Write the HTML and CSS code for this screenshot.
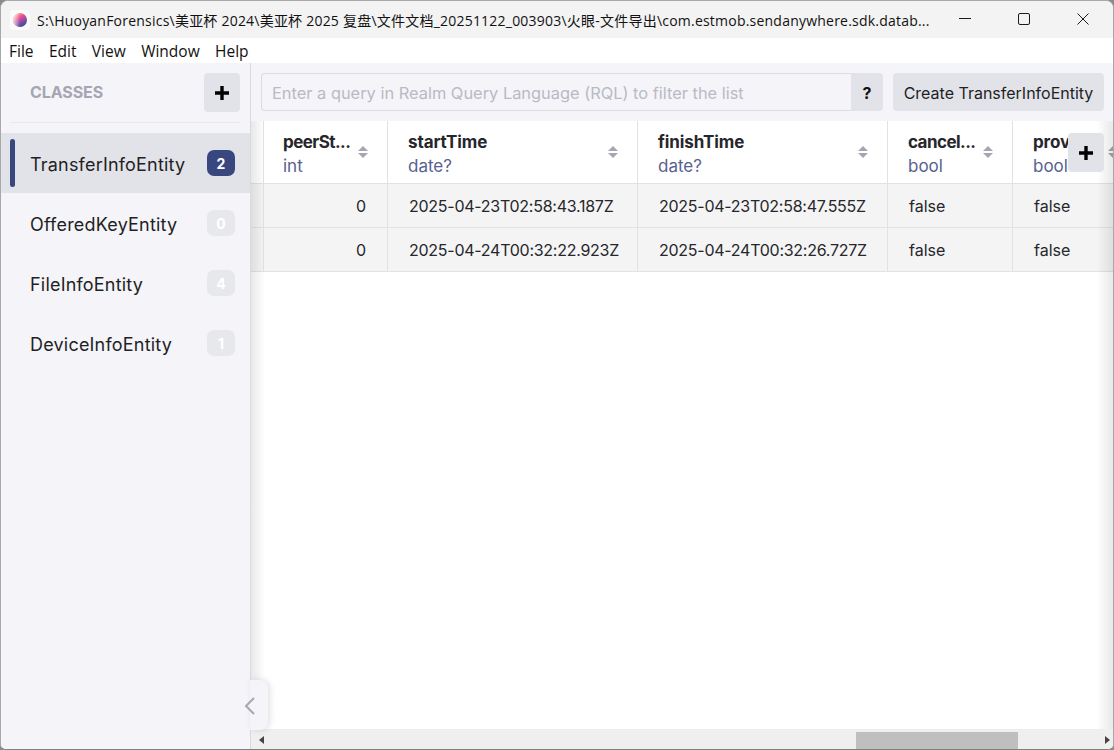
FILE: index.html
```html
<!DOCTYPE html>
<html lang="en">
<head>
<meta charset="utf-8">
<title>Realm Studio</title>
<link rel="stylesheet" href="styles.css">
</head>
<body>
<div class="window">
  <header class="titlebar">
    <div class="app-icon">
      <svg width="16" height="16" viewBox="0 0 16 16">
        <defs>
          <linearGradient id="orb" x1="0.2" y1="0" x2="0.75" y2="1">
            <stop offset="0" stop-color="#fbb98f"/>
            <stop offset="0.35" stop-color="#ee4f93"/>
            <stop offset="0.7" stop-color="#7a4ea8"/>
            <stop offset="1" stop-color="#39477f"/>
          </linearGradient>
          <linearGradient id="orb-light" x1="0" y1="0" x2="1" y2="0">
            <stop offset="0" stop-color="#fff" stop-opacity="0.75"/>
            <stop offset="0.5" stop-color="#fff" stop-opacity="0"/>
          </linearGradient>
        </defs>
        <circle cx="8" cy="8" r="7" fill="url(#orb)"/>
        <circle cx="8" cy="8" r="7" fill="url(#orb-light)"/>
      </svg>
    </div>
    <div class="title">S:\HuoyanForensics\美亚杯 2024\美亚杯 2025 复盘\文件文档_20251122_003903\火眼-文件导出\com.estmob.sendanywhere.sdk.datab...</div>
    <div class="win-controls">
      <svg class="win-btn" width="12" height="12" viewBox="0 0 12 12"><path d="M0 5.5H12" stroke="#1a1a1a" stroke-width="1"/></svg>
      <svg class="win-btn" width="12" height="12" viewBox="0 0 12 12"><rect x="0.5" y="0.5" width="11" height="11" rx="1.5" fill="none" stroke="#1a1a1a"/></svg>
      <svg class="win-btn" width="12" height="12" viewBox="0 0 12 12"><path d="M0.5 0.5L11.5 11.5M11.5 0.5L0.5 11.5" stroke="#1a1a1a" stroke-width="1"/></svg>
    </div>
  </header>
  <nav class="menubar">
    <span>File</span><span>Edit</span><span>View</span><span>Window</span><span>Help</span>
  </nav>
  <div class="main">
    <aside class="sidebar">
      <div class="side-head">
        <span class="classes">CLASSES</span>
        <button class="icon-btn"><svg width="14" height="14" viewBox="0 0 14 14"><path d="M7 0V14M0 7H14" stroke="#000" stroke-width="3.4"/></svg></button>
      </div>
      <ul class="class-list">
        <li class="class-item active"><span>TransferInfoEntity</span><b class="count">2</b></li>
        <li class="class-item"><span>OfferedKeyEntity</span><b class="count">0</b></li>
        <li class="class-item"><span>FileInfoEntity</span><b class="count">4</b></li>
        <li class="class-item"><span>DeviceInfoEntity</span><b class="count">1</b></li>
      </ul>
    </aside>
    <section class="content">
      <div class="toolbar">
        <div class="query">
          <div class="query-input">Enter a query in Realm Query Language (RQL) to filter the list</div>
          <div class="query-help">?</div>
        </div>
        <button class="create">Create TransferInfoEntity</button>
      </div>
      <div class="table-wrap">
        <div class="grid">
          <div class="cell head sliver"></div>
          <div class="cell head col-peer"><div class="head-text"><strong class="trunc">peerSt...</strong><em>int</em></div><i class="sort"></i></div>
          <div class="cell head"><div class="head-text"><strong>startTime</strong><em>date?</em></div><i class="sort"></i></div>
          <div class="cell head"><div class="head-text"><strong>finishTime</strong><em>date?</em></div><i class="sort"></i></div>
          <div class="cell head"><div class="head-text"><strong class="trunc">cancel...</strong><em>bool</em></div><i class="sort"></i></div>
          <div class="cell head"><div class="head-text"><strong>provider</strong><em>bool</em></div><i class="sort"></i></div>

          <div class="cell sliver"></div>
          <div class="cell num">0</div>
          <div class="cell date">2025-04-23T02:58:43.187Z</div>
          <div class="cell date">2025-04-23T02:58:47.555Z</div>
          <div class="cell">false</div>
          <div class="cell">false</div>

          <div class="cell sliver"></div>
          <div class="cell num">0</div>
          <div class="cell date">2025-04-24T00:32:22.923Z</div>
          <div class="cell date">2025-04-24T00:32:26.727Z</div>
          <div class="cell">false</div>
          <div class="cell">false</div>
        </div>
        <div class="shadow-left"></div>
        <div class="shadow-right"></div>
        <button class="icon-btn add-col"><svg width="14" height="14" viewBox="0 0 14 14"><path d="M7 0V14M0 7H14" stroke="#000" stroke-width="3.4"/></svg></button>
      </div>
      <div class="scrollbar">
        <svg class="arrow" width="6" height="8" viewBox="0 0 6 8"><path d="M5 0V8L0 4Z" fill="#444"/></svg>
        <div class="track"><div class="thumb"></div></div>
        <svg class="arrow" width="6" height="8" viewBox="0 0 6 8"><path d="M0 0V8L5 4Z" fill="#444"/></svg>
      </div>
    </section>
    <button class="collapse"><svg width="12" height="20" viewBox="0 0 12 20"><path d="M10 2L2 10L10 18" fill="none" stroke="#a6a7b2" stroke-width="2"/></svg></button>
  </div>
</div>
</body>
</html>
```
FILE: styles.css
```css
* { box-sizing: border-box; }
html, body { margin: 0; height: 100%; background: #8a8a8a; }
body { overflow: hidden; font-family: Inter, "Noto Sans CJK SC", sans-serif; color: #1f1f24; }
button { font-family: inherit; border: 0; padding: 0; margin: 0; }
ul { list-style: none; margin: 0; padding: 0; }

.window {
  width: 1114px; height: 750px; display: flex; flex-direction: column;
  background: #fff; border: 1px solid #a8a8a8; border-bottom-color: #808080;
  border-radius: 8px 8px 6px 6px; overflow: hidden;
}
.titlebar { height: 37px; flex: none; display: flex; align-items: center; background: #f3f3f3; padding-left: 9px; }
.app-icon { flex: none; width: 20px; height: 20px; background: #fbfbfb; border-radius: 3px; display: flex; align-items: center; justify-content: center; }
.title {
  font-family: "Open Sans", "Noto Sans CJK SC", sans-serif; font-size: 14px; color: #111;
  margin-left: 7px; flex: 1; white-space: nowrap; overflow: hidden; letter-spacing: 0.22px;
}
.win-controls { display: flex; flex: none; width: 177px; gap: 47px; padding-left: 23px; margin-bottom: 1px; }
.win-btn { flex: none; }

.menubar { height: 25px; flex: none; display: flex; gap: 15.4px; align-items: center; padding-left: 8px; background: #fff; font-family: "Open Sans", sans-serif; font-size: 15.5px; color: #111; }

.main { flex: 1; display: flex; min-height: 0; position: relative; background: #f4f4f9; }
.sidebar { width: 250px; flex: none; background: #f4f4f9; border-right: 1px solid #d9d9de; display: flex; flex-direction: column; position: relative; z-index: 3; }
.side-head { height: 60px; margin: 0 10px 10px 9px; padding: 10px 0 10px 20px; display: flex; align-items: center; justify-content: space-between; border-bottom: 1px solid #e8e8ee; }
.classes { font-size: 16px; font-weight: 700; color: #a5a6b2; letter-spacing: -0.1px; margin-top: -1px; }
.icon-btn { width: 36px; height: 39px; background: #e2e3e9; border-radius: 4px; display: flex; align-items: center; justify-content: center; }

.class-item { height: 60px; display: flex; align-items: center; justify-content: space-between; padding: 2px 15px 0 29px; font-size: 18px; position: relative; letter-spacing: 0.2px; }
.class-item.active { background: #e2e3e9; }
.class-item.active::before { content: ""; position: absolute; left: 9px; top: 6px; bottom: 6px; width: 5px; border-radius: 3px; background: #39477f; }
.count { width: 28px; height: 26px; border-radius: 7px; background: #e7e8ec; color: #fff; font-size: 14px; font-weight: 700; display: flex; align-items: center; justify-content: center; margin-top: -2px; letter-spacing: 0; }
.active .count { background: #39477f; }

.content { flex: 1; min-width: 0; display: flex; flex-direction: column; }
.toolbar { height: 58px; flex: none; display: flex; align-items: center; gap: 10px; padding: 0 9px 0 10px; background: #f4f4f9; }
.query { flex: 1; height: 38px; display: flex; }
.query-input { flex: 1; border: 1px solid #dcdde3; border-right: 0; border-radius: 4px 0 0 4px; background: #f4f4f9; color: #b9bac4; font-size: 16.4px; line-height: 38px; padding-left: 10px; white-space: nowrap; overflow: hidden; }
.query-help { width: 32px; background: #e2e3e9; border-radius: 0 4px 4px 0; font-weight: 700; font-size: 16px; color: #111; display: flex; align-items: center; justify-content: center; padding-top: 1px; }
.create { width: 211px; height: 38px; background: #e2e3e9; border-radius: 4px; font-size: 16px; color: #1f1f24; white-space: nowrap; padding-top: 1px; }

.table-wrap { flex: 1; position: relative; overflow: hidden; background: #fff; min-height: 0; }
.grid { display: grid; grid-template-columns: 13px 124px 250px 250px 125px 125px; grid-template-rows: 63px 44px 44px; width: 887px; }
.cell { display: flex; align-items: center; padding: 1px 20px 0 21px; background: #f4f4f4; border-right: 1px solid #e2e2e4; border-bottom: 1px solid #e2e2e4; font-size: 16px; white-space: nowrap; overflow: hidden; color: #26262b; }
.cell.num { justify-content: flex-end; padding-right: 21px; }
.cell.date { letter-spacing: -0.26px; }
.cell.sliver { padding: 0; }
.cell.head { background: #fff; justify-content: space-between; padding: 3px 19px 0 20px; }
.cell.head.sliver { padding: 0; }
.cell.head.col-peer { padding-left: 19px; }
.head-text { min-width: 0; display: flex; flex-direction: column; line-height: 24px; }
.head-text strong { font-size: 17px; font-weight: 700; color: #26262b; letter-spacing: -0.1px; }
.head-text strong.trunc { letter-spacing: -0.55px; }
.head-text em { font-style: normal; font-size: 17px; color: #57618f; }
.sort { flex: none; width: 10px; height: 12px; position: relative; display: block; margin-top: -3px; }
.sort::before, .sort::after { content: ""; position: absolute; left: 0; border-left: 5px solid transparent; border-right: 5px solid transparent; }
.sort::before { top: 0; border-bottom: 5px solid #a5a6b2; }
.sort::after { bottom: 0; border-top: 5px solid #a5a6b2; }

.shadow-left { position: absolute; left: 0; top: 0; bottom: 0; width: 14px; background: linear-gradient(to right, rgba(0,0,0,0.09), rgba(0,0,0,0)); pointer-events: none; }
.shadow-right { position: absolute; right: 0; top: 0; bottom: 0; width: 16px; background: linear-gradient(to left, rgba(0,0,0,0.09), rgba(0,0,0,0)); pointer-events: none; }
.add-col { position: absolute; top: 12px; right: 9px; }

.scrollbar { height: 20px; flex: none; display: flex; align-items: center; background: #efefef; padding: 1px 2px 0 8px; border-top: 1px solid #ededed; }
.arrow { flex: none; }
.track { flex: 1; height: 17px; position: relative; margin: 0 2px; }
.thumb { position: absolute; left: 589px; width: 162px; top: 0; bottom: 0; background: #bfbfbf; }

.collapse { position: absolute; left: 249px; bottom: 19px; width: 18px; height: 50px; background: #f4f4f9; border-radius: 0 8px 8px 0; box-shadow: 2px 0 6px rgba(0,0,0,0.12); z-index: 4; display: flex; align-items: center; justify-content: flex-start; }
.collapse svg { margin-left: -6px; margin-top: 2px; }
```
